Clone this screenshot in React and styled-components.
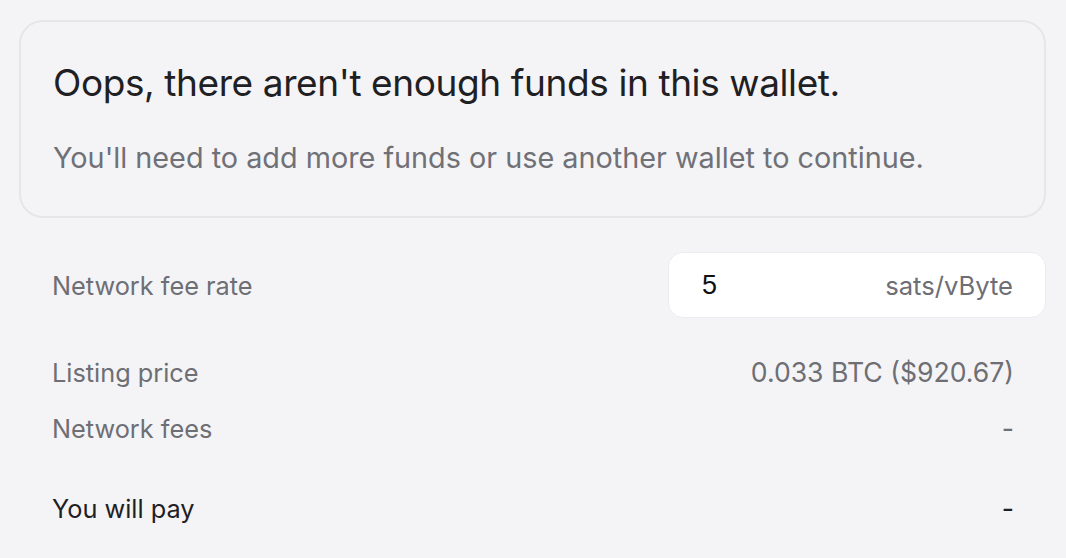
import React from "react";
import styled, { createGlobalStyle } from "styled-components";

const GlobalStyle = createGlobalStyle`
  html, body {
    margin: 0;
    padding: 0;
    background: #f4f4f6;
  }
  body {
    font-family: Inter, "Noto Sans", sans-serif;
    -webkit-font-smoothing: antialiased;
  }
`;

const Page = styled.div`
  width: 1066px;
  height: 558px;
  box-sizing: border-box;
  padding: 20px 20px 0 19px;
  background: #f4f4f6;
  overflow: hidden;
`;

const Card = styled.div`
  box-sizing: border-box;
  height: 198px;
  border: 2px solid #e6e6e9;
  border-radius: 24px;
  padding: 0 32px;
  display: flex;
  flex-direction: column;
  justify-content: center;
  gap: 38px;
`;

const Title = styled.h2`
  margin: 0;
  font-size: 37px;
  font-weight: 400;
  letter-spacing: -0.4px;
  color: #1f2023;
  line-height: 40px;
`;

const Subtitle = styled.p`
  margin: 0;
  font-size: 28.8px;
  font-weight: 400;
  color: #707077;
  line-height: 34px;
`;

const FeeRow = styled.div`
  margin-top: 34px;
  display: flex;
  align-items: center;
  justify-content: space-between;
  padding-left: 33px;
`;

const Label = styled.span`
  font-size: 25.3px;
  color: ${(p) => (p.$strong ? "#1f2023" : "#6e6e75")};
`;

const FeeInput = styled.div`
  box-sizing: border-box;
  width: 378px;
  height: 66px;
  background: #ffffff;
  border: 1px solid #ececef;
  border-radius: 15px;
  display: flex;
  align-items: center;
  justify-content: space-between;
  padding: 0 32px 0 33px;
`;

const FeeValue = styled.span`
  font-family: "Liberation Sans", Arial, sans-serif;
  font-size: 27px;
  color: #111111;
`;

const Unit = styled.span`
  font-size: 25.6px;
  color: #6e6e75;
`;

const Summary = styled.div`
  margin-top: 26px;
  display: flex;
  flex-direction: column;
`;

const Row = styled.div`
  height: 56px;
  display: flex;
  align-items: center;
  justify-content: space-between;
  padding: 0 32px 0 33px;
  margin-top: ${(p) => (p.$gap ? "24px" : "0")};
`;

const Value = styled.span`
  font-size: 26.6px;
  color: ${(p) => (p.$strong ? "#1f2023" : "#6e6e75")};
`;

export default function App() {
  return (
    <Page>
      <GlobalStyle />
      <Card>
        <Title>Oops, there aren't enough funds in this wallet.</Title>
        <Subtitle>
          You'll need to add more funds or use another wallet to continue.
        </Subtitle>
      </Card>
      <FeeRow>
        <Label>Network fee rate</Label>
        <FeeInput>
          <FeeValue>5</FeeValue>
          <Unit>sats/vByte</Unit>
        </FeeInput>
      </FeeRow>
      <Summary>
        <Row>
          <Label>Listing price</Label>
          <Value>0.033 BTC ($920.67)</Value>
        </Row>
        <Row>
          <Label>Network fees</Label>
          <Value>-</Value>
        </Row>
        <Row $gap>
          <Label $strong>You will pay</Label>
          <Value $strong>-</Value>
        </Row>
      </Summary>
    </Page>
  );
}
